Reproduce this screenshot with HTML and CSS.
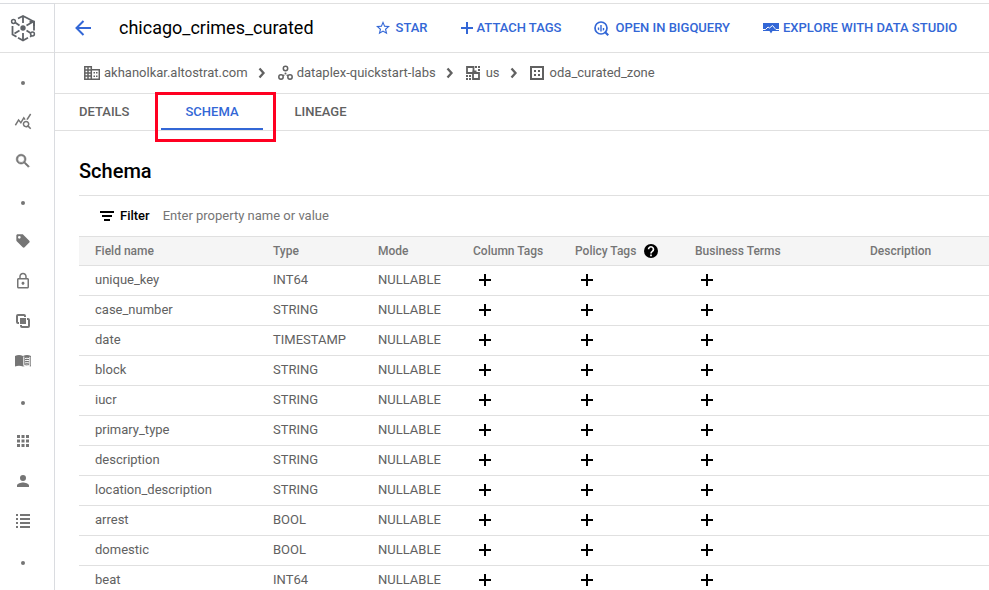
FILE: index.html
```html
<!DOCTYPE html>
<html lang="en">
<head>
<meta charset="utf-8">
<title>chicago_crimes_curated</title>
<link rel="stylesheet" href="styles.css">
</head>
<body>
<svg class="sprite" aria-hidden="true">
  <symbol id="plus" viewBox="0 0 12 12"><path d="M5 0h2v5h5v2H7v5H5V7H0V5h5z"/></symbol>
  <symbol id="chevron" viewBox="0 0 8 12"><path d="M1.500 1.500 5.500 6l-4 4.500" fill="none" stroke="currentColor" stroke-width="2.300"/></symbol>
</svg>
<div class="app">
  <nav class="rail" aria-label="Product">
    <a class="logo" href="#" aria-label="Dataplex">
      <svg width="26" height="28" viewBox="0 0 26 28"><g fill="none" stroke="#5f6368" stroke-width="1.800">
        <path d="M8 4.500 13 2l5 2.500M18 4.500l6 3.200v8.800M2.500 12v8.500l4 2.300M8 23.800l5 2.700 5-2.700M20 22.800l1.500-.8"/>
        <path d="M13 2v7M13 19v7.500M16.500 11.500l7-4M9.500 16.500l-5 3M5.500 8.800 9.500 11.500M16.500 16.500l4 2.500M19.500 7.700H24V12"/>
        <circle cx="3.500" cy="7.500" r="1.900" stroke-width="1.500"/><circle cx="22.500" cy="20" r="1.900" stroke-width="1.500"/></g>
        <circle cx="13" cy="14" r="2.700" fill="#5f6368"/>
      </svg>
    </a>
    <ul class="rail-list">
      <li class="dot"></li>
      <li><a href="#" aria-label="Explore"><svg width="18" height="18" viewBox="0 0 24 24"><path d="M19.880 18.470c.44-.7.7-1.510.7-2.390 0-2.490-2.010-4.500-4.500-4.500s-4.500 2.010-4.500 4.500 2.010 4.500 4.490 4.500c.88 0 1.700-.26 2.390-.7L21.580 23 23 21.580l-3.120-3.110zm-3.800.11c-1.380 0-2.500-1.120-2.500-2.500s1.120-2.500 2.500-2.500 2.500 1.120 2.500 2.500-1.120 2.500-2.500 2.500zm-.36-8.500c-.74.02-1.450.18-2.100.45l-.55-.83-3.800 6.180-3.010-3.520-3.630 5.810L1 17l5-8 3 3.500L13 6l2.720 4.080zm2.590.5c-.64-.28-1.330-.45-2.050-.49L21.380 2 23 3.180l-4.690 7.400z"/></svg></a></li>
      <li><a href="#" aria-label="Search"><svg width="18" height="18" viewBox="0 0 24 24"><path stroke="currentColor" stroke-width=".8" d="M15.500 14h-.79l-.28-.27A6.500 6.500 0 1 0 13.730 14.430l.27.28v.79l5 4.990L20.490 19l-4.990-5zm-6 0a4.500 4.500 0 1 1 0-9 4.500 4.500 0 0 1 0 9z"/></svg></a></li>
      <li class="dot"></li>
      <li><a href="#" aria-label="Tags"><svg width="16" height="16" viewBox="0 0 24 24"><path d="m21.410 11.580-9-9C12.050 2.220 11.550 2 11 2H4c-1.100 0-2 .9-2 2v7c0 .55.22 1.050.59 1.420l9 9c.36.36.86.58 1.410.58s1.050-.22 1.410-.59l7-7c.37-.36.59-.86.59-1.410s-.23-1.060-.59-1.420zM6.500 8.500a2 2 0 1 1 0-4 2 2 0 0 1 0 4z"/></svg></a></li>
      <li><a href="#" aria-label="Security"><svg width="18" height="18" viewBox="0 0 24 24"><path d="M18 8h-1V6c0-2.760-2.240-5-5-5S7 3.240 7 6v2H6c-1.100 0-2 .9-2 2v10c0 1.100.9 2 2 2h12c1.100 0 2-.9 2-2V10c0-1.100-.9-2-2-2zM9 6c0-1.660 1.340-3 3-3s3 1.340 3 3v2H9V6zm9 14H6V10h12v10zm-6-3c1.100 0 2-.9 2-2s-.9-2-2-2-2 .9-2 2 .9 2 2 2z"/></svg></a></li>
      <li><a href="#" aria-label="Process"><svg width="14" height="14" viewBox="0 0 14 14"><path d="M4 4h6v6H4z"/><path fill="none" stroke="currentColor" stroke-width="2" d="M3 9H2Q1 9 1 8V2Q1 1 2 1h6Q9 1 9 2v1M11 5h1q1 0 1 1v6q0 1-1 1H6Q5 13 5 12v-1"/></svg></a></li>
      <li><a href="#" aria-label="Glossary"><svg width="18" height="14" viewBox="0 0 18 14"><path d="M1 2Q5 .2 9 2q4-1.800 8 0v10.500q-4-1.400-8 0-4-1.400-8 0z"/><path fill="none" stroke="#fff" stroke-width="1" d="M9.800 2.500v9M15.800 2.800v8.700q-3-.8-6 0M11 4.500q1.800-.5 4 0M11 6.700q1.800-.5 4 0M11 8.900q1.800-.5 4 0"/></svg></a></li>
      <li class="dot"></li>
      <li><a href="#" aria-label="Manage"><svg width="12" height="12" viewBox="0 0 12 12"><path d="M0 0h3v3H0zm4.500 0h3v3h-3zM9 0h3v3H9zM0 4.500h3v3H0zm4.500 0h3v3h-3zm4.500 0h3v3H9zM0 9h3v3H0zm4.500 0h3v3h-3zM9 9h3v3H9z"/></svg></a></li>
      <li><a href="#" aria-label="Permissions"><svg width="18" height="18" viewBox="0 0 24 24"><path d="M12 12a4 4 0 1 0 0-8 4 4 0 0 0 0 8zm0 2c-2.670 0-8 1.340-8 4v2h16v-2c0-2.660-5.330-4-8-4z"/></svg></a></li>
      <li><a href="#" aria-label="List"><svg width="14" height="14" viewBox="0 0 14 14"><path d="M0 0h2v2H0zm4 0h10v2H4zM0 4h2v2H0zm4 0h10v2H4zM0 8h2v2H0zm4 0h10v2H4zM0 12h2v2H0zm4 0h10v2H4z"/></svg></a></li>
      <li class="dot"></li>
    </ul>
  </nav>
  <main class="main">
    <header class="topbar">
      <button class="back" type="button" aria-label="Back"><svg width="16" height="16" viewBox="0 0 16 16"><path fill="none" stroke="currentColor" stroke-width="2" d="M16 8H2M8.500 1 1.500 8l7 7"/></svg></button>
      <h1>chicago_crimes_curated</h1>
      <div class="actions">
        <button type="button"><svg width="14" height="14" viewBox="2 2 20 20"><path d="m22 9.240-7.190-.62L12 2 9.190 8.630 2 9.240l5.460 4.730L5.820 21 12 17.270 18.180 21l-1.630-7.030L22 9.240zM12 15.400l-3.760 2.270 1-4.280-3.320-2.880 4.380-.38L12 6.100l1.710 4.040 4.380.38-3.320 2.880 1 4.280L12 15.400z"/></svg>STAR</button>
        <button class="tight" type="button"><svg width="12" height="12"><use href="#plus"/></svg>ATTACH TAGS</button>
        <button type="button"><svg width="15" height="15" viewBox="0 0 15 15"><circle cx="7" cy="7" r="6" fill="none" stroke="currentColor" stroke-width="1.700"/><path d="M3.800 6.500h1.400v3L3.800 8.500zM6.300 4h1.400v6.500H6.300zM8.800 7h1.400v2L8.800 9.800zM10 11.500l1.500-1.500 3.500 3.500-1.500 1.500z"/></svg>OPEN IN BIGQUERY</button>
        <button class="tight" type="button"><svg width="16" height="12" viewBox="0 0 16 12"><path d="M0 1h16v8H9.500L8 11.500 6.500 9H0z"/><path fill="none" stroke="#fff" stroke-width="1" d="M0 7.500h2.500l2.500-2.500 1.500 1L9.500 3.500 12 6.500l1 1h3"/></svg>EXPLORE WITH DATA STUDIO</button>
      </div>
    </header>
    <nav class="crumbs" aria-label="Breadcrumb">
      <a href="#"><svg width="16" height="14" viewBox="0 0 16 14"><path fill="none" stroke="currentColor" stroke-width="1.500" d="M.8.8h6.500v12.500H.8zM7.500 3.800h7.800v9.500H7.500M.8 4h6.500M.8 7h6.500M.8 10h6.500M4 .8v12.500"/><path d="M9.500 6h1.500v1.500H9.500zM12 6h1.500v1.500H12zM9.500 9.500H11V11H9.500zM12 9.500h1.500V11H12z"/></svg>akhanolkar.altostrat.com</a>
      <svg class="chev" width="8" height="12"><use href="#chevron"/></svg>
      <a href="#"><svg width="15" height="16" viewBox="0 0 15 16"><g fill="none" stroke="currentColor" stroke-width="1.500"><circle cx="7.500" cy="3.500" r="2.200"/><circle cx="3" cy="12" r="2.200"/><circle cx="12" cy="12" r="2.200"/></g><circle cx="7.500" cy="8.500" r="1"/><circle cx="5.800" cy="10.300" r=".8"/><circle cx="9.200" cy="10.300" r=".8"/></svg>dataplex-quickstart-labs</a>
      <svg class="chev" width="8" height="12"><use href="#chevron"/></svg>
      <a class="roomy" href="#"><svg width="14" height="14" viewBox="0 0 14 14"><path fill="none" stroke="currentColor" stroke-width="1.800" d="M1 1h6.500v6H1zM7 7h6v6H7z"/><path d="M6.500 4.500h4V6h-4zM9 0h2v2H9zM12 0h2v2h-2zM12 3h2v2h-2zM0 9h2v2H0zM0 12h2v2H0zM3 12h2v2H3zM3 9h2v2H3z"/></svg>us</a>
      <svg class="chev" width="8" height="12"><use href="#chevron"/></svg>
      <a class="roomy" href="#"><svg width="14" height="14" viewBox="0 0 14 14"><path fill="none" stroke="currentColor" stroke-width="2" d="M1 1h12v12H1z"/><path d="M4 4h2v2H4zm4 0h2v2H8zM4 8h2v2H4zm4 0h2v2H8z"/></svg>oda_curated_zone</a>
    </nav>
    <div class="tabs" role="tablist">
      <button role="tab" type="button">DETAILS</button>
      <button role="tab" type="button" class="active" aria-selected="true">SCHEMA<span class="highlight"></span></button>
      <button role="tab" type="button">LINEAGE</button>
    </div>
    <section class="content">
      <h2>Schema</h2>
      <div class="filter">
        <svg width="14" height="10" viewBox="0 0 14 10"><path d="M0 0h14v2H0zM2 4h10v2H2zM4 8h6v2H4z"/></svg>
        <label for="filter">Filter</label>
        <input id="filter" type="text" placeholder="Enter property name or value">
      </div>
      <table>
        <colgroup><col class="c-name"><col class="c-type"><col class="c-mode"><col class="c-tags"><col class="c-policy"><col class="c-terms"><col></colgroup>
        <thead><tr><th>Field name</th><th>Type</th><th>Mode</th><th>Column Tags</th><th><span class="with-help">Policy Tags <svg width="14" height="14" viewBox="2 2 20 20"><path d="M12 2a10 10 0 1 0 0 20 10 10 0 0 0 0-20z"/><path fill="none" stroke="#fff" stroke-width="2.400" d="M8.500 9.500a3.500 3.500 0 1 1 5.300 3q-1.800 1.200-1.800 3"/><path fill="#fff" d="M10.800 17h2.400v2.400h-2.400z"/></svg></span></th><th>Business Terms</th><th>Description</th></tr></thead>
        <tbody id="rows"></tbody>
      </table>
    </section>
  </main>
</div>
<script src="script.js"></script>
</body>
</html>
```
FILE: styles.css
```css
* { box-sizing: border-box; }
body {
  margin: 0;
  background: #fff;
  color: #616161;
  font: 13px/20px Roboto, "Liberation Sans", sans-serif;
}
button, input { font: inherit; color: inherit; border: 0; padding: 0; background: none; }
a { color: inherit; text-decoration: none; }
svg { fill: currentColor; flex: none; display: block; }
.sprite { display: none; }
.app {
  display: flex;
  height: 100vh;
  overflow: hidden;
  padding-top: 3px;
}
.rail {
  flex: none;
  width: 55px;
  border: solid #dadce0;
  border-width: 1px 1px 0 0;
  color: #757575;
}
.logo {
  display: flex;
  align-items: center;
  justify-content: center;
  height: 49px;
  padding-right: 8px;
  border-bottom: 1px solid #e0e0e0;
}
.rail-list { list-style: none; margin: 0; padding: 8px 8px 0 0; }
.rail-list li, .rail-list a {
  display: flex;
  align-items: center;
  justify-content: center;
  height: 40px;
}
.rail-list .dot { padding-top: 4px; }
.dot::before {
  content: "";
  width: 4px;
  height: 4px;
  border-radius: 50%;
  background: #757575;
}
.main { flex: 1; min-width: 0; border-top: 1px solid #e0e0e0; }
.topbar {
  display: flex;
  align-items: center;
  height: 49px;
  padding-left: 20px;
  border-bottom: 1px solid #e0e0e0;
}
.back { color: #3367d6; margin-right: 28px; }
h1 { margin: 0; font-size: 18px; line-height: 24px; font-weight: 400; color: #000; white-space: nowrap; }
.actions { display: flex; gap: 33px; margin-left: 62px; }
.actions button {
  display: flex;
  align-items: center;
  gap: 6px;
  color: #3367d6;
  font-weight: 500;
  white-space: nowrap;
}
.actions .tight { gap: 4px; }
.crumbs {
  display: flex;
  align-items: center;
  height: 41px;
  padding-left: 29px;
  border-bottom: 1px solid #e0e0e0;
}
.crumbs a { display: flex; align-items: center; gap: 4px; }
.crumbs .roomy { gap: 6px; }
.chev { margin: 0 12px 0 10px; }
.tabs {
  display: flex;
  gap: 8px;
  height: 37px;
  border-bottom: 1px solid #e0e0e0;
}
.tabs button { position: relative; padding: 2px 24px 0; font-weight: 500; border-bottom: 2px solid transparent; }
.tabs .active { color: #3367d6; border-color: #3367d6; }
.highlight {
  position: absolute;
  inset: -2px -13px -14px -6px;
  border: 3px solid #ff0021;
}
.content { padding: 28px 0 0 24px; }
h2 { margin: 0 0 12px; font-size: 20px; line-height: 24px; font-weight: 500; color: #000; }
.filter {
  display: flex;
  align-items: center;
  height: 41px;
  padding-left: 21px;
  border-top: 1px solid #e0e0e0;
  color: #000;
}
.filter label { margin: 0 13px 0 6px; font-weight: 500; }
.filter input { flex: 1; outline: 0; }
.filter input::placeholder { color: #757575; opacity: 1; }
table { width: 100%; table-layout: fixed; border-collapse: separate; border-spacing: 0; }
.c-name { width: 194px; }
.c-type { width: 105px; }
.c-mode { width: 95px; }
.c-tags { width: 102px; }
.c-policy { width: 120px; }
.c-terms { width: 175px; }
th, td { height: 30px; padding: 0; text-align: left; border-bottom: 1px solid #e0e0e0; white-space: nowrap; }
td { padding-bottom: 2px; }
th:first-child, td:first-child { padding-left: 16px; }
th {
  background: #f5f5f5;
  border-top: 1px solid #e0e0e0;
  font-size: 12px;
  font-weight: 500;
  color: #757575;
}
.with-help { display: flex; align-items: center; gap: 8px; }
.with-help svg { color: #000; }
.add { display: block; padding: 0 6px; color: #000; }
```
FILE: script.js
```javascript
const fields = [
  ["unique_key", "INT64"],
  ["case_number", "STRING"],
  ["date", "TIMESTAMP"],
  ["block", "STRING"],
  ["iucr", "STRING"],
  ["primary_type", "STRING"],
  ["description", "STRING"],
  ["location_description", "STRING"],
  ["arrest", "BOOL"],
  ["domestic", "BOOL"],
  ["beat", "INT64"],
];
const add = label => `<td><button class="add" type="button" aria-label="Add ${label}"><svg width="12" height="12"><use href="#plus"/></svg></button></td>`;
document.getElementById("rows").innerHTML = fields.map(([name, type]) =>
  `<tr><td>${name}</td><td>${type}</td><td>NULLABLE</td>${add("column tag")}${add("policy tag")}${add("business term")}<td></td></tr>`
).join("");
```
